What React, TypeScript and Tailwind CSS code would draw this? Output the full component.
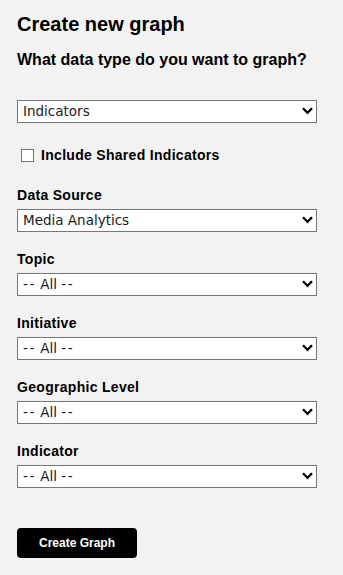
import React from "react";

function Chevron() {
  return (
    <svg width="11" height="8" viewBox="0 0 11 8" className="mb-[2px] shrink-0">
      <path d="M1 1.3 L5.5 5.8 L10 1.3" fill="none" stroke="#000" strokeWidth="2.3" />
    </svg>
  );
}

function Select({ children }: { children: React.ReactNode }) {
  return (
    <div className="flex h-[23px] w-[300px] items-center justify-between border border-[#767676] bg-white pl-[5px] pr-[3px]">
      <span
        className="block text-[13.5px] leading-[21px] text-[#1a1a1a]"
        style={{ fontFamily: '"DejaVu Sans", Verdana, sans-serif' }}
      >
        {children}
      </span>
      <Chevron />
    </div>
  );
}

function AllOption() {
  return (
    <>
      <span className="tracking-[1.6px]">--</span> All <span className="tracking-[1.6px]">--</span>
    </>
  );
}

function Field({ label, children }: { label: string; children: React.ReactNode }) {
  return (
    <div className="flex flex-col">
      <div className="h-[22px] text-[14px] font-bold leading-[16px] tracking-[0.3px] text-black">{label}</div>
      <Select>{children}</Select>
    </div>
  );
}

export default function App() {
  return (
    <div
      className="min-h-[575px] w-[343px] bg-[#f2f2f2] px-[17px] pt-[12px]"
      style={{ fontFamily: '"Liberation Sans", Arial, sans-serif' }}
    >
      <h1 className="text-[20px] font-bold leading-[24px] text-black">Create new graph</h1>
      <h2 className="mt-[14px] text-[16px] font-bold leading-[20px] text-black">What data type do you want to graph?</h2>
      <div className="mt-[30px]">
        <Select>Indicators</Select>
      </div>
      <label className="ml-[4px] mt-[24px] flex items-center gap-[7px]">
        <span className="h-[13px] w-[13px] border border-[#767676] bg-white" />
        <span className="text-[14px] font-bold leading-[16px] tracking-[0.3px] text-black">Include Shared Indicators</span>
      </label>
      <div className="mt-[24px] flex flex-col gap-[19px]">
        <Field label="Data Source">Media Analytics</Field>
        <Field label="Topic"><AllOption /></Field>
        <Field label="Initiative"><AllOption /></Field>
        <Field label="Geographic Level"><AllOption /></Field>
        <Field label="Indicator"><AllOption /></Field>
      </div>
      <button className="mt-[40px] h-[30px] w-[120px] rounded-[4px] bg-black text-[12px] font-bold text-white">
        Create Graph
      </button>
    </div>
  );
}
